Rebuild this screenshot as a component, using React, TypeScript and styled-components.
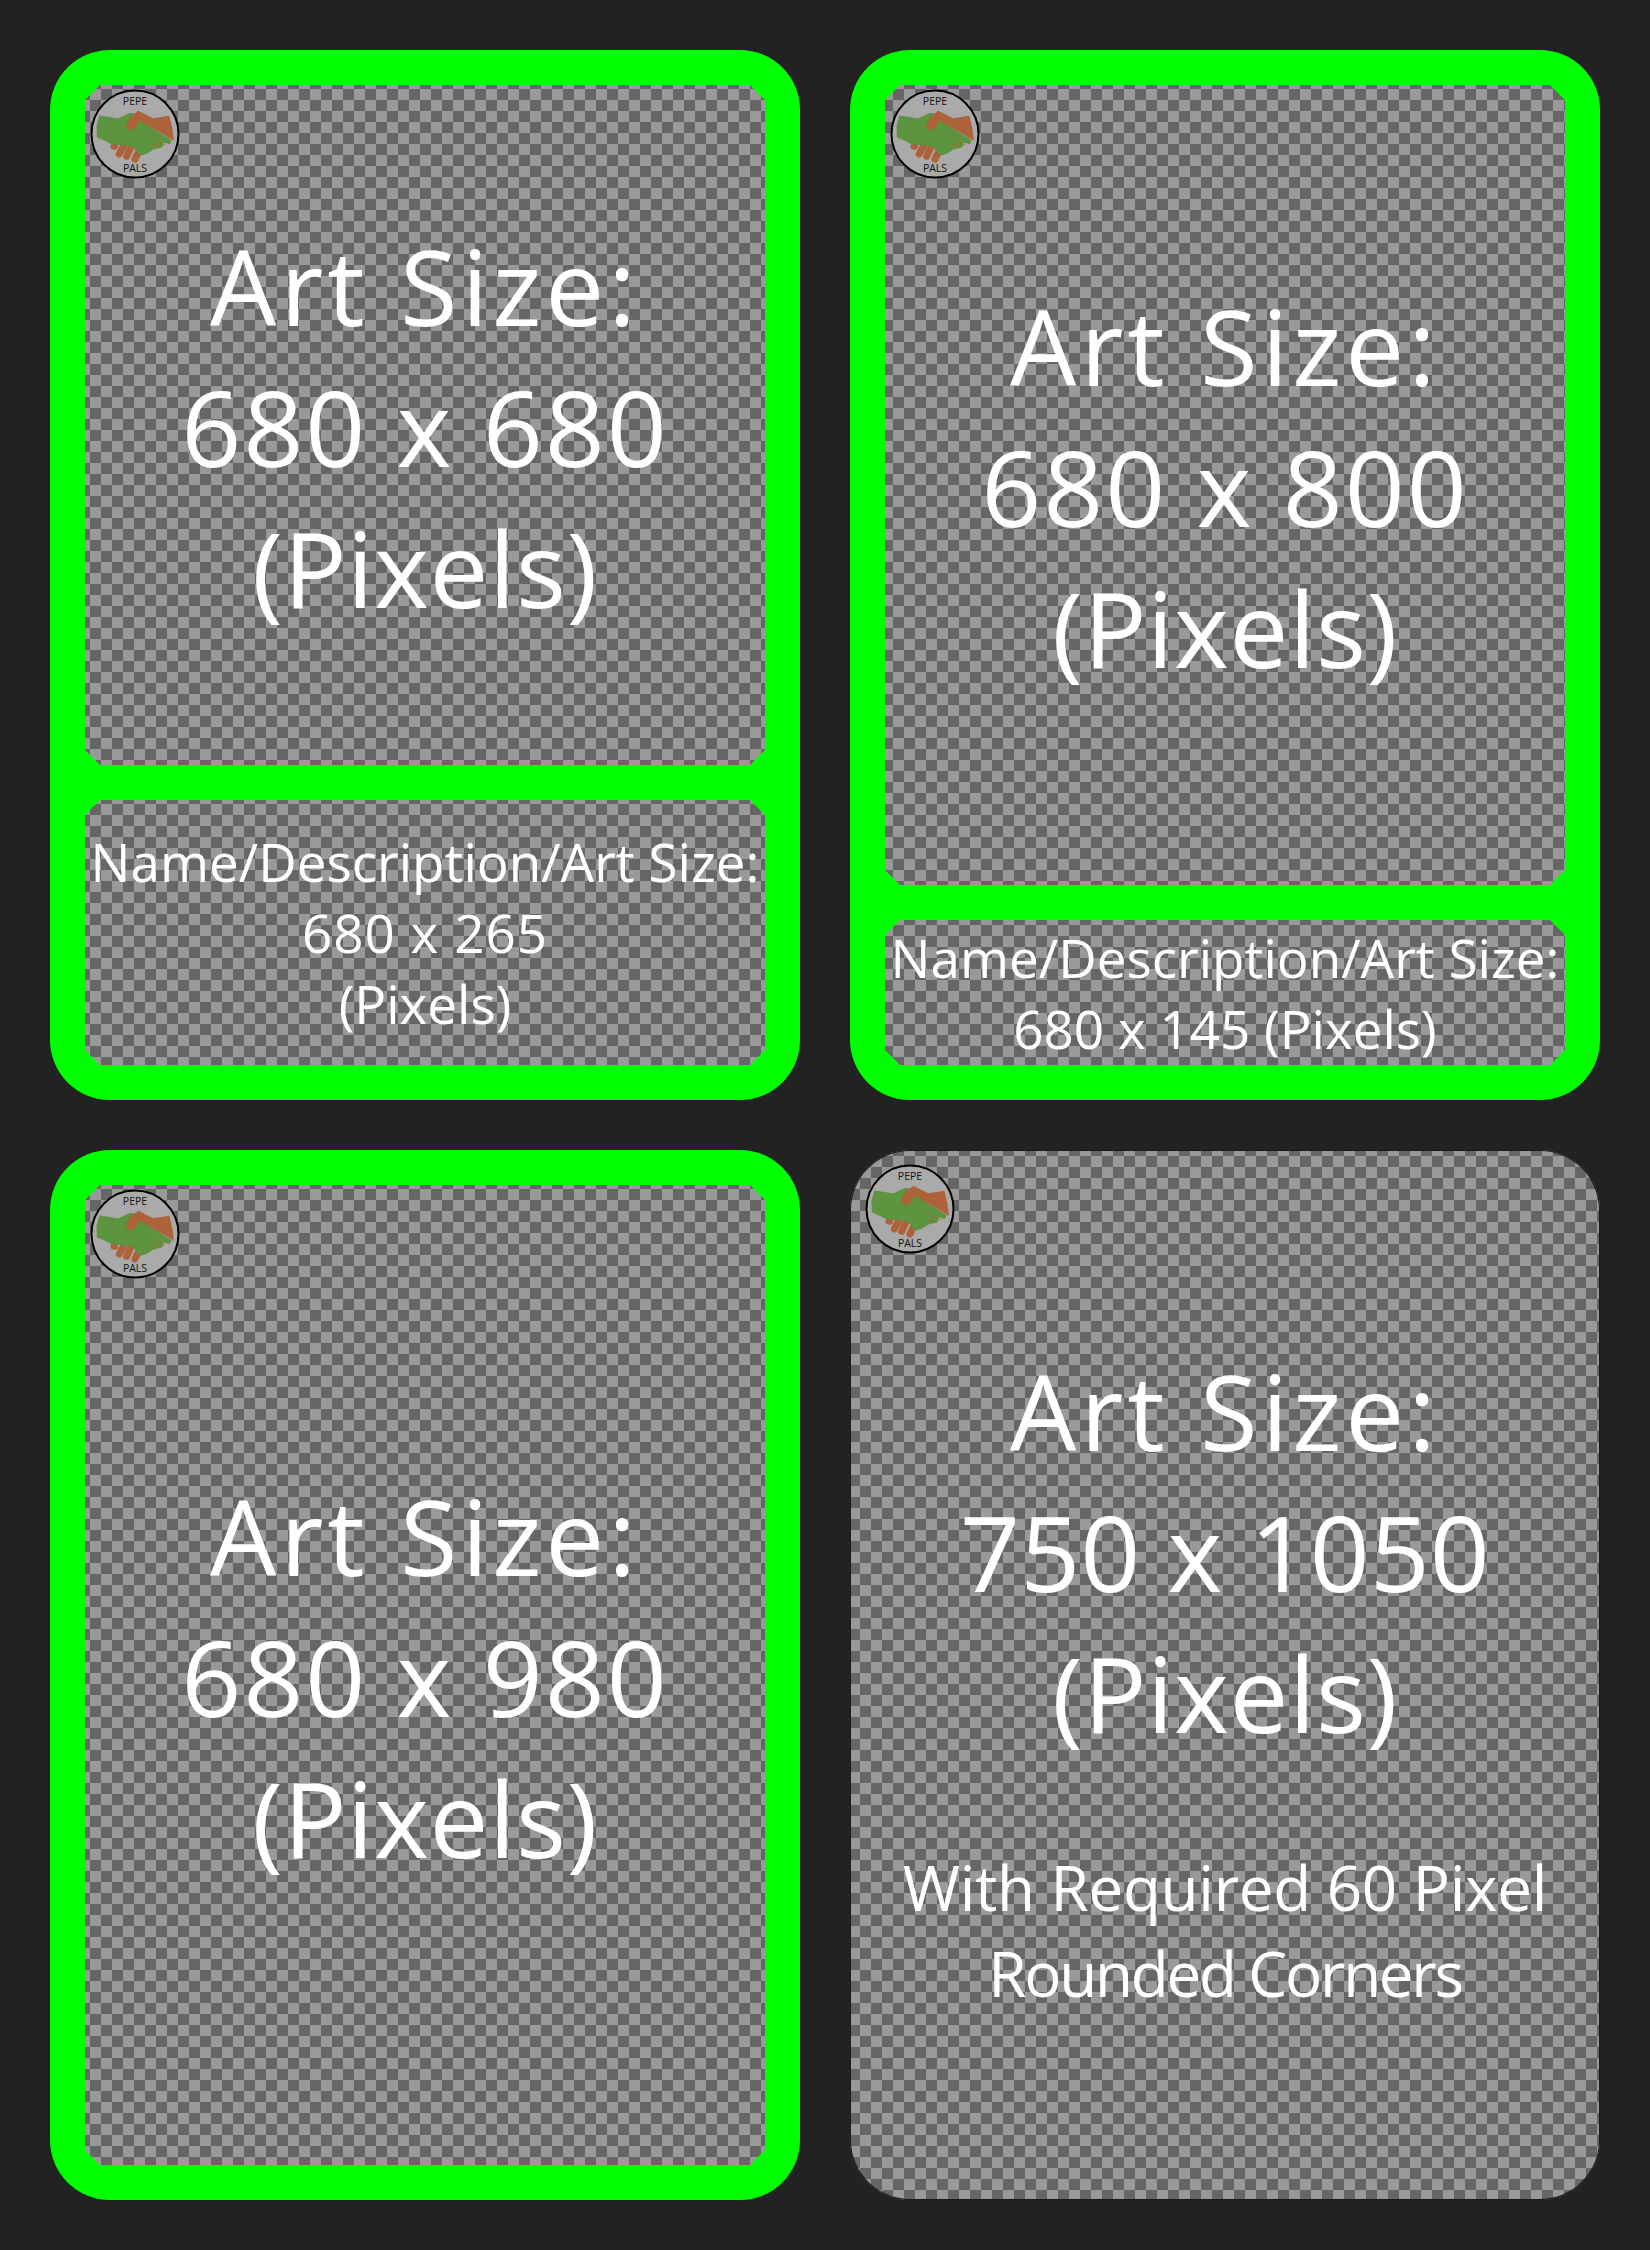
import { FC } from "react";
import styled, { createGlobalStyle, css } from "styled-components";

const GlobalStyle = createGlobalStyle`
  html, body {
    margin: 0;
    padding: 0;
    background: #222222;
  }
`;

const Page = styled.div`
  width: 1650px;
  height: 2250px;
  box-sizing: border-box;
  padding: 50px;
  display: grid;
  grid-template-columns: 750px 750px;
  grid-auto-rows: 1050px;
  gap: 50px;
  background: #222222;
  font-family: "Open Sans", "Noto Sans", sans-serif;
  color: #fff;
`;

const checker = css`
  background: repeating-conic-gradient(#666666 0 25%, #999999 0 50%) 2px 1px / 22px 22px fixed;
`;

const Card = styled.section`
  display: flex;
  flex-direction: column;
  gap: 35px;
  padding: 35px;
  background: #00ff00;
  border-radius: 60px;
`;

const Panel = styled.div<{ $height: number }>`
  position: relative;
  height: ${(p) => p.$height}px;
  display: flex;
  flex-direction: column;
  align-items: center;
  justify-content: center;
  clip-path: polygon(
    15px 0, calc(100% - 15px) 0, 100% 15px, 100% calc(100% - 15px),
    calc(100% - 15px) 100%, 15px 100%, 0 calc(100% - 15px), 0 15px
  );
  ${checker}
`;

const FullCard = styled.section`
  position: relative;
  display: flex;
  flex-direction: column;
  align-items: center;
  justify-content: center;
  padding-top: 3px;
  border-radius: 60px;
  box-shadow: inset 0 0 0 1px #1a1a1a;
  ${checker}
`;

const BigBlock = styled.div`
  padding-top: 3px;
`;

const BigLine = styled.div<{ $spacing?: number }>`
  font-size: 105px;
  line-height: 141px;
  text-align: center;
  white-space: pre;
  letter-spacing: ${(p) => p.$spacing ?? 0}px;
`;

const NoteBlock = styled.div`
  margin-top: 81px;
`;

const NoteLine = styled.div<{ $spacing?: number }>`
  font-size: 62px;
  line-height: 86px;
  text-align: center;
  white-space: pre;
  letter-spacing: ${(p) => p.$spacing ?? 0}px;
`;

const DescLine = styled.div<{ $spacing?: number }>`
  font-size: 53px;
  line-height: 71px;
  text-align: center;
  white-space: pre;
  letter-spacing: ${(p) => p.$spacing ?? 0}px;
`;

const LogoSvg = styled.svg<{ $inset: number }>`
  position: absolute;
  top: ${(p) => p.$inset - 51}px;
  left: ${(p) => p.$inset - 50}px;
  width: 100px;
  height: 100px;
`;

const Logo: FC<{ inset: number }> = ({ inset }) => (
  <LogoSvg $inset={inset} viewBox="0 0 100 100">
    <circle cx="50" cy="50" r="43.5" fill="#aaaaaa" stroke="#000" strokeWidth="2" />
    <text x="50" y="20.5" fontSize="10.5" textAnchor="middle" fill="#111">PEPE</text>
    <text x="50" y="88" fontSize="10.5" textAnchor="middle" fill="#111">PALS</text>
    <g stroke="#ad6239" strokeWidth="7" strokeLinecap="round">
      <path d="M29 62.3 L29.5 62.3" />
      <path d="M34.3 70 L38.3 62.3" />
      <path d="M41.7 72.3 L45.7 63.3" />
      <path d="M50 75 L54 66.7" />
    </g>
    <path
      d="M15 32 L33.3 35 L45 29.5 L56 31 L65 43.3 L86 56.5 L84.5 59.5 L78 58 L76.7 63 L68.3 65 L61 69.5 L55.5 71 L48 62 L26.7 59.5 L12.5 53 L12 42 Z"
      fill="#5c9440"
      stroke="#5c9440"
      strokeWidth="1.2"
      strokeLinejoin="round"
    />
    <path
      d="M53.3 26.7 L68.3 34.3 L84.3 31.7 Q88 44 89 56.7 L55 36.7 L49 45 A5 5 0 0 1 41 41 L45 33.3 Z"
      fill="#ad6239"
      strokeLinejoin="round"
    />
    <path d="M70 56 L80 61 M66 60 L74 63" stroke="#ad6239" strokeWidth="1" />
  </LogoSvg>
);

const ArtLabel: FC<{ size: string; spacing?: number }> = ({ size, spacing = 2 }) => (
  <BigBlock>
    <BigLine $spacing={4}>Art Size:</BigLine>
    <BigLine $spacing={spacing}>{size}</BigLine>
    <BigLine $spacing={0.5}>(Pixels)</BigLine>
  </BigBlock>
);

const App: FC = () => (
  <Page>
    <GlobalStyle />
    <Card>
      <Panel $height={680}>
        <Logo inset={50} />
        <ArtLabel size="680 x 680" />
      </Panel>
      <Panel $height={265}>
        <DescLine>Name/Description/Art Size:</DescLine>
        <DescLine $spacing={1}>680 x 265</DescLine>
        <DescLine>(Pixels)</DescLine>
      </Panel>
    </Card>
    <Card>
      <Panel $height={800}>
        <Logo inset={50} />
        <ArtLabel size="680 x 800" />
      </Panel>
      <Panel $height={145}>
        <DescLine>Name/Description/Art Size:</DescLine>
        <DescLine>680 x 145 (Pixels)</DescLine>
      </Panel>
    </Card>
    <Card>
      <Panel $height={980}>
        <Logo inset={50} />
        <ArtLabel size="680 x 980" />
      </Panel>
    </Card>
    <FullCard>
      <Logo inset={60} />
      <ArtLabel size="750 x 1050" spacing={0} />
      <NoteBlock>
        <NoteLine $spacing={-0.3}>With Required 60 Pixel</NoteLine>
        <NoteLine $spacing={-2.3}>Rounded Corners</NoteLine>
      </NoteBlock>
    </FullCard>
  </Page>
);

export default App;
